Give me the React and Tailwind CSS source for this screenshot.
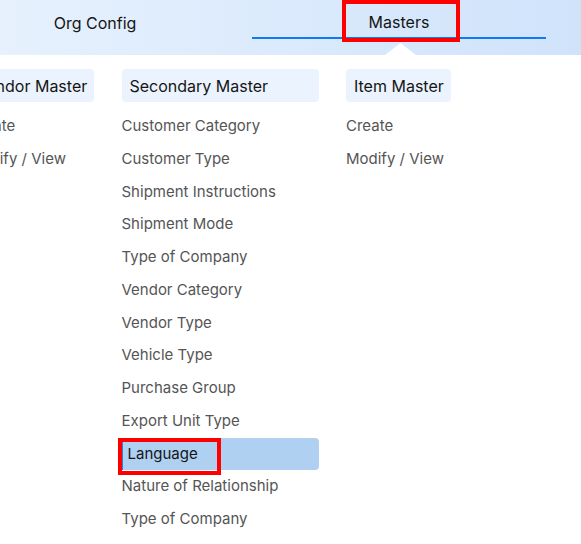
import React from 'react';

const columns = [
    { title: 'Vendor Master', width: 'w-[126px]', items: ['Create', 'Modify / View'] },
    {
        title: 'Secondary Master',
        width: 'w-[197px]',
        items: [
            'Customer Category',
            'Customer Type',
            'Shipment Instructions',
            'Shipment Mode',
            'Type of Company',
            'Vendor Category',
            'Vendor Type',
            'Vehicle Type',
            'Purchase Group',
            'Export Unit Type',
            'Language',
            'Nature of Relationship',
            'Type of Company',
        ],
    },
    { title: 'Item Master', width: 'w-[105px]', items: ['Create', 'Modify / View'] },
];

const App = () => {
    return (
        <div className="w-[581px] h-[544px] overflow-hidden bg-white font-['Inter',sans-serif] antialiased">
            {/* Top tabs */}
            <header className="relative h-[55px] bg-gradient-to-r from-[#e6f1fd] to-[#d0e3fb]">
                <nav className="flex gap-[10px] ml-[-52px]">
                    <div className="w-[294px] h-[39px] pt-[7px] flex items-center justify-center text-[16px] text-[#151515]">
                        Org Config
                    </div>
                    <div className="relative w-[294px] h-[39px] pt-[7px] flex items-center justify-center text-[16px] text-[#151515] border-b-2 border-[#0b7cf3]">
                        Masters
                        <div className="absolute left-[90px] top-0 w-[118px] h-[42px] border-4 border-[#ff0000]" />
                    </div>
                </nav>
                <svg className="absolute left-[385px] top-[43px]" width="31" height="12" viewBox="0 0 31 12">
                    <polygon points="15.5,0 31,12 0,12" fill="#ffffff" />
                </svg>
            </header>

            {/* Mega menu */}
            <div className="flex gap-[27.5px] ml-[-32px] pt-[14px]">
                {columns.map((col) => (
                    <div key={col.title} className={`${col.width} shrink-0`}>
                        <div className="h-[33px] rounded-[4px] bg-[#ebf4fe] px-2 flex items-center text-[16px] text-[#151515] whitespace-nowrap">
                            {col.title}
                        </div>
                        <ul className="mt-[8px]">
                            {col.items.map((item, i) =>
                                item === 'Language' ? (
                                    <li
                                        key={i}
                                        className="relative h-[32.75px] flex items-center text-[15px] text-[#151515] bg-[#afd0f1] rounded-r-[4px] border-l border-[#2f7de1] pl-[5px]"
                                    >
                                        {item}
                                        <div className="absolute left-[-5px] top-0 w-[103px] h-[37px] border-4 border-[#ff0000]" />
                                    </li>
                                ) : (
                                    <li key={i} className="h-[32.75px] flex items-center text-[15px] text-[#555555] whitespace-nowrap">
                                        {item}
                                    </li>
                                )
                            )}
                        </ul>
                    </div>
                ))}
            </div>
        </div>
    );
};

export default App;
